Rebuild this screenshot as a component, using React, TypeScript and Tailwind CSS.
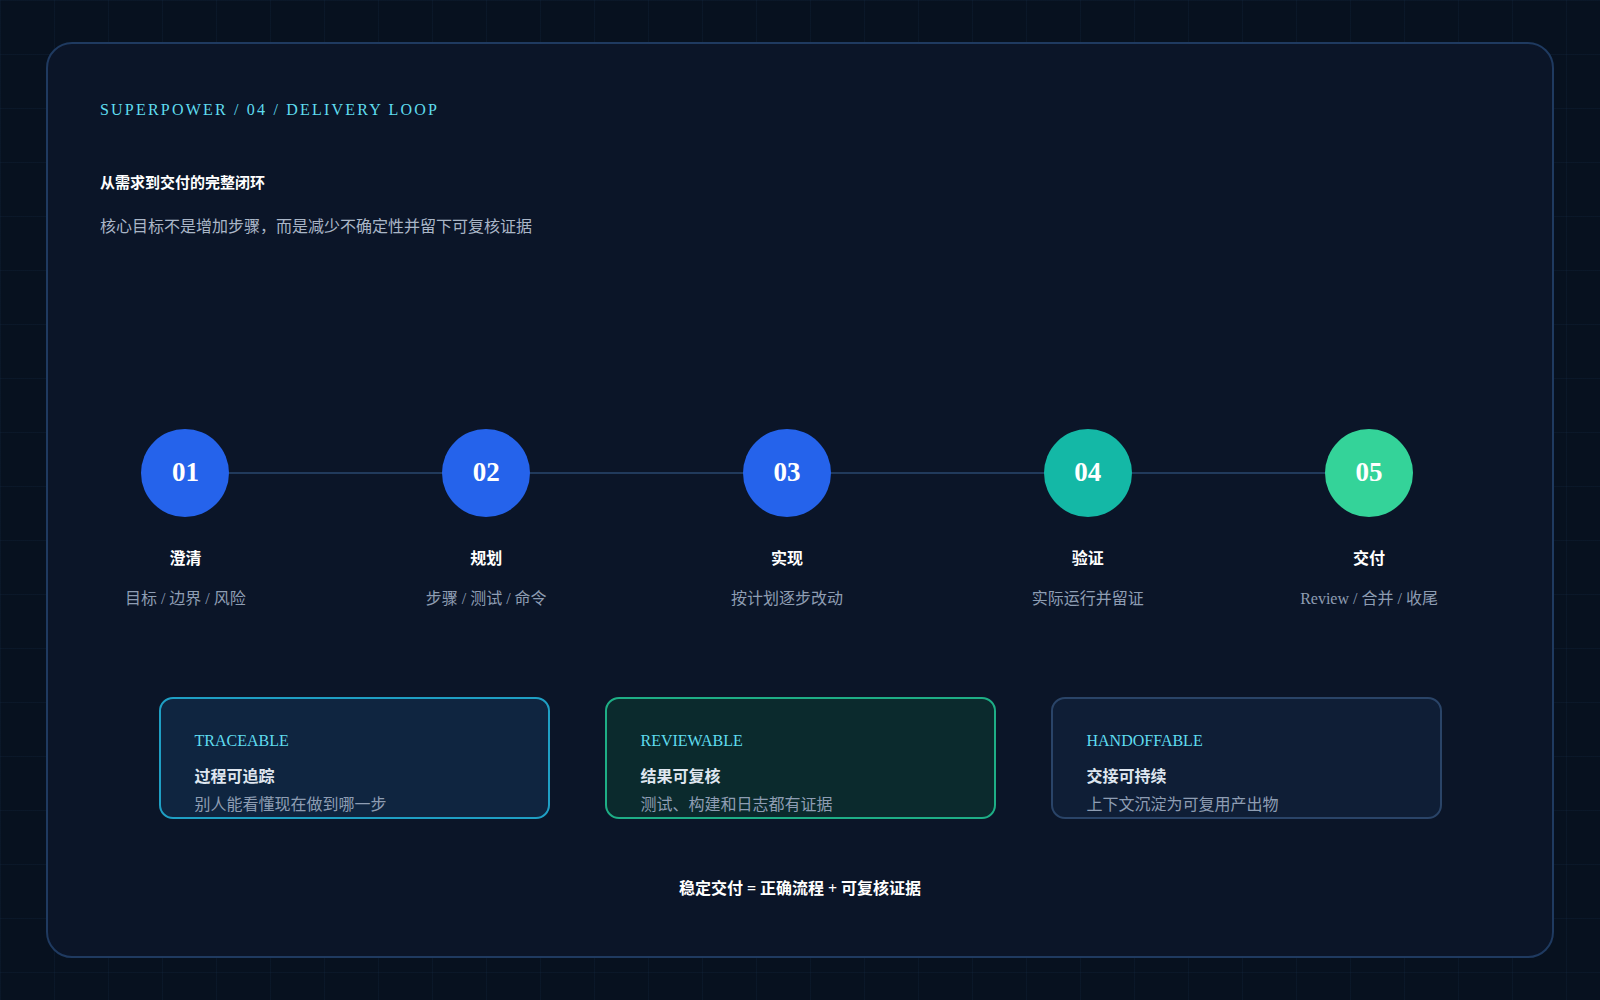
const steps = [
  { n: "01", t: "澄清", d: "目标 / 边界 / 风险", c: "bg-[#2563eb]", w: "w-[310px]" },
  { n: "02", t: "规划", d: "步骤 / 测试 / 命令", c: "bg-[#2563eb]", w: "w-[310px]" },
  { n: "03", t: "实现", d: "按计划逐步改动", c: "bg-[#2563eb]", w: "w-[310px]" },
  { n: "04", t: "验证", d: "实际运行并留证", c: "bg-[#14b8a6]", w: "w-[310px]" },
  { n: "05", t: "交付", d: "Review / 合并 / 收尾", c: "bg-[#34d399]", w: "w-[270px]" },
];

const cards = [
  { k: "TRACEABLE", t: "过程可追踪", d: "别人能看懂现在做到哪一步", box: "border-[#1f9fc4] bg-[#0f2540]" },
  { k: "REVIEWABLE", t: "结果可复核", d: "测试、构建和日志都有证据", box: "border-[#1eae86] bg-[#0b2a2d]" },
  { k: "HANDOFFABLE", t: "交接可持续", d: "上下文沉淀为可复用产出物", box: "border-[#2a4468] bg-[#0f1e36]" },
];

const font = { fontFamily: '"Liberation Serif", "Noto Sans CJK SC", serif' };

export default function App() {
  return (
    <div
      className="w-[1600px] h-[1000px] bg-[#07111f] pt-[42px] px-[46px] pb-[42px]"
      style={{
        ...font,
        backgroundImage:
          "linear-gradient(rgba(40,70,110,0.12) 1px, transparent 1px), linear-gradient(90deg, rgba(40,70,110,0.12) 1px, transparent 1px)",
        backgroundSize: "54px 54px",
      }}
    >
      <div className="h-[916px] rounded-[26px] border-2 border-[#1f3a60] bg-[#0b1528] px-[52px] pt-[54px] flex flex-col">
        <div className="text-[16px] tracking-[2.2px] text-[#5fdcef]">SUPERPOWER / 04 / DELIVERY LOOP</div>
        <div className="mt-[50px] text-[15px] font-bold text-white">从需求到交付的完整闭环</div>
        <div className="mt-[20px] text-[16px] text-[#aab6c7]">核心目标不是增加步骤，而是减少不确定性并留下可复核证据</div>

        <div className="relative mt-[190px] ml-[-65px] flex">
          <div className="absolute left-[155px] right-[135px] top-[43px] h-[2px] bg-[#213a5c]" />
          {steps.map((s) => (
            <div key={s.n} className={`relative flex flex-col items-center ${s.w}`}>
              <div className={`w-[88px] h-[88px] rounded-full ${s.c} flex items-center justify-center text-[27px] font-bold text-white`}>
                {s.n}
              </div>
              <div className="mt-[30px] text-[16px] font-bold text-white">{s.t}</div>
              <div className="mt-[16px] text-[16px] text-[#8e9db3]">{s.d}</div>
            </div>
          ))}
        </div>

        <div className="mt-[86px] flex justify-center gap-[55px]">
          {cards.map((c) => (
            <div key={c.k} className={`w-[391px] h-[122px] overflow-hidden rounded-[14px] border-2 ${c.box} px-[34px] pt-[30px]`}>
              <div className="text-[16px] text-[#5fdcef]">{c.k}</div>
              <div className="mt-[12px] text-[16px] font-bold text-[#dfe6ef]">{c.t}</div>
              <div className="mt-[4px] text-[16px] text-[#8e9db3]">{c.d}</div>
            </div>
          ))}
        </div>

        <div className="mt-[58px] text-center text-[16px] font-bold text-white">稳定交付 = 正确流程 + 可复核证据</div>
      </div>
    </div>
  );
}
